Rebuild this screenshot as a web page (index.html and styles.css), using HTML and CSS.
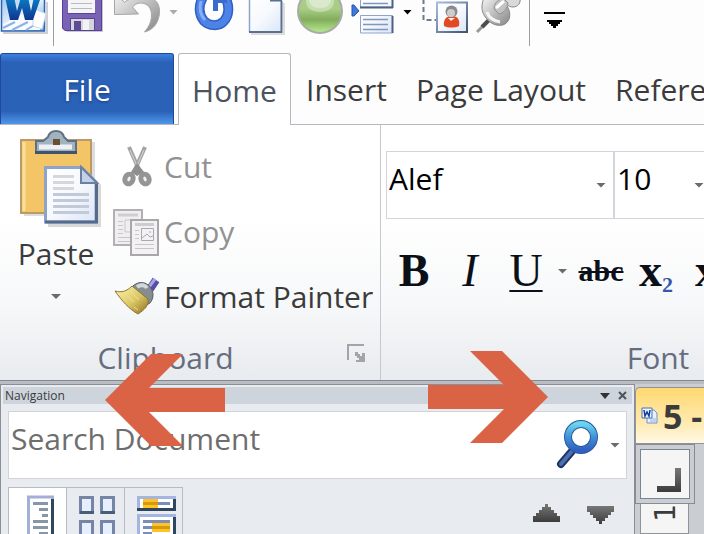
FILE: index.html
```html
<!DOCTYPE html>
<html lang="en">
<head>
  <meta charset="UTF-8">
  <meta name="viewport" content="width=device-width, initial-scale=1.0">
  <title>Word</title>
  <link rel="stylesheet" href="styles.css">
</head>
<body>
  <svg width="0" height="0" class="defs" aria-hidden="true">
    <defs>
      <linearGradient id="paper" x1="0" y1="0" x2="1" y2="1"><stop offset="0" stop-color="#fff"/><stop offset=".5" stop-color="#f6f9fe"/><stop offset="1" stop-color="#dbe5f6"/></linearGradient>
      <linearGradient id="edge" x1="0" y1="0" x2="1" y2="1"><stop offset="0" stop-color="#a9bbdf"/><stop offset="1" stop-color="#3f546f"/></linearGradient>
      <linearGradient id="dark" x1="0" y1="0" x2="0" y2="1"><stop offset="0" stop-color="#777"/><stop offset="1" stop-color="#3c3c3c"/></linearGradient>
      <linearGradient id="silver" x1="0" y1="0" x2="1" y2="1"><stop offset="0" stop-color="#f4f4f4"/><stop offset="1" stop-color="#858585"/></linearGradient>
    </defs>
  </svg>

  <header class="quick-access">
    <button class="tool" aria-label="Word">
      <svg width="50" height="50" viewBox="0 0 50 50">
        <defs><linearGradient id="wbg" x1="0" y1="0" x2="1" y2="1"><stop offset="0" stop-color="#9fc4ee"/><stop offset=".5" stop-color="#e6f1fc"/><stop offset="1" stop-color="#5f9be0"/></linearGradient>
        <linearGradient id="wl" x1="0" y1="0" x2="0" y2="1"><stop offset="0" stop-color="#0a7fc8"/><stop offset="1" stop-color="#10358f"/></linearGradient></defs>
        <path d="M3 33h44V2" fill="none" stroke="#cfcfcf" stroke-width="2"/>
        <path d="M1.500-3v34h43V-3" fill="url(#wbg)" stroke="#2d63b4" stroke-width="1.500"/>
        <path d="M3 24l28-14 15 3-6 17H3z" fill="#f9fbff"/>
        <path d="M3 28l12-6M12 30l16-8M26 30l12-7" stroke="#8bb3e6" stroke-width="2"/>
        <path d="M33 8l13 6-4 15-9-3z" fill="#fff" stroke="#c8d9f0"/>
        <path d="M5-3h9l3 14 4-14h7l3 14 3-14h7l-8 23h-8l-3-12-4 12h-8z" fill="url(#wl)"/>
      </svg>
    </button>
    <span class="divider"></span>
    <button class="tool" aria-label="Save">
      <svg width="51" height="50" viewBox="57 0 51 50">
        <path d="M65-2h38v34H67l-3-3z" fill="#c9c9c9"/>
        <path d="M62-2h40v33H65l-3-3z" fill="#7a62b5"/>
        <path d="M62.500-2v30l2.500 2.500h36.500V-2" fill="none" stroke="#55409a"/>
        <path d="M68-2h27v15H68z" fill="#f5f5f7"/>
        <path d="M71 3.500h21M71 8.500h21" stroke="#b9bac4"/>
        <path d="M67 13.500h29" stroke="#5a4499"/>
        <path d="M71 19h24v11H71z" fill="#d5d6dc"/>
        <path d="M74 21h7v9h-7z" fill="#5f4a96"/>
        <path d="M83 20h6v10h-6z" fill="#f3f3f5"/>
        <path d="M70.500 30V18.500h24V30" fill="none" stroke="#5a4499"/>
      </svg>
    </button>
    <button class="tool" aria-label="Undo">
      <svg width="57" height="50" viewBox="108 0 57 50">
        <path d="M114.500 14.500V-6l10 8c6-4 12-5 20-5 9 0 15 5 15 14 0 11-6 19-15 21 5-6 7-11 7-17 0-7-4-12-11-12-4 0-6 2-8 4l6 7z" fill="url(#silver)" stroke="#a6a6a6"/>
      </svg>
    </button>
    <button class="tool" aria-label="Undo options">
      <svg width="22" height="50" viewBox="165 0 22 50"><path d="M169.500 10h8l-4 4.500z" fill="#aaa"/></svg>
    </button>
    <button class="tool" aria-label="Repeat">
      <svg width="53" height="50" viewBox="187 0 53 50">
        <path d="M203-3c-5 9-4 18 1 24 5 5 15 6 20 0 5-5 6-15 1-24" fill="none" stroke="#2f60c4" stroke-width="10"/>
        <path d="M203-3c-5 9-4 18 1 24 5 5 15 6 20 0 5-5 6-15 1-24" fill="none" stroke="#4d82e6" stroke-width="7"/>
        <path d="M201 1c-2 8-1 14 4 19" fill="none" stroke="#86adf8" stroke-width="3"/>
        <path d="M213-2h14v5h-9v8h-5z" fill="#3a6bd0"/>
      </svg>
    </button>
    <button class="tool" aria-label="New">
      <svg width="50" height="50" viewBox="240 0 50 50">
        <path d="M249.500-2v34h32V0h-12v-2z" fill="url(#paper)"/>
        <path d="M251 34h33V3" fill="none" stroke="#dcdcdc" stroke-width="2"/>
        <path d="M249.500 0v32" stroke="#8ea4c9" stroke-width="1.500"/>
        <path d="M249 32h33M281.500 33V1M270 .5h12" stroke="#5b7090" stroke-width="2"/>
      </svg>
    </button>
    <button class="tool" aria-label="Record">
      <svg width="58" height="50" viewBox="290 0 58 50">
        <defs><linearGradient id="ball" x1="0" y1="0" x2="0" y2="1"><stop offset=".45" stop-color="#a9cc86"/><stop offset=".7" stop-color="#82ad5c"/><stop offset="1" stop-color="#b9ee90"/></linearGradient></defs>
        <circle cx="320" cy="11" r="22" fill="url(#ball)" stroke="#a9aba7" stroke-width="2"/>
        <path d="M306-1h28c1 8-5 13-14 13s-15-5-14-13z" fill="#fff" opacity=".35"/>
        <path d="M309-1h22c0 6-4 9-11 9s-11-3-11-9z" fill="#fff" opacity=".35"/>
      </svg>
    </button>
    <button class="tool" aria-label="Insert section">
      <svg width="50" height="50" viewBox="348 0 50 50">
        <path d="M352 5h2l5 6-5 5h-2z" fill="#3f78d8" stroke="#2553ae"/>
        <path d="M360.500-2v9h32v-9M360.500 33V15.500h32V33z" fill="url(#paper)" stroke="#8ea4c9"/>
        <path d="M360 7.500h33M392.500-1v9M392.500 16v17" stroke="#4b6284" stroke-width="2"/>
        <path d="M363 3.500h25M363 19.500h25M363 24.500h25M363 29.500h25" stroke="#7f96bd" stroke-width="1.500"/>
      </svg>
    </button>
    <button class="tool" aria-label="Section options">
      <svg width="20" height="50" viewBox="398 0 20 50"><path d="M403.500 10h8l-4 4.500z" fill="#000"/></svg>
    </button>
    <button class="tool" aria-label="Select recipient">
      <svg width="54" height="50" viewBox="418 0 54 50">
        <path d="M423.500-1v21H436" fill="none" stroke="#6d7b92" stroke-width="2" stroke-dasharray="5 3"/>
        <path d="M437 2.500h30V32h-30z" fill="url(#paper)" stroke="url(#edge)" stroke-width="2"/>
        <path d="M444 26c-1-6 2-10 8-10s8 4 7 10c-4 2-11 2-15 0z" fill="#e24b22"/>
        <circle cx="451.500" cy="11.500" r="6" fill="#8b8b8b"/><circle cx="451" cy="13" r="4" fill="#cdcdcd"/>
        <path d="M448 18l3 3 4-3z" fill="#ececec"/>
      </svg>
    </button>
    <button class="tool" aria-label="Pin">
      <svg width="54" height="50" viewBox="472 0 54 50">
        <path d="M477 32l6-6" stroke="#999" stroke-width="3"/><path d="M482 27l7-7" stroke="#4d4d4d" stroke-width="4"/>
        <path d="M484-2c-3 7-3 14 2 20 5 7 14 9 19 6 6-4 6-12 2-18L500-2z" fill="url(#silver)" stroke="#858585"/>
        <path d="M487 12c2 6 7 9 13 10" fill="none" stroke="#f5f5f5" stroke-width="3"/>
        <path d="M503-2h17c1 5-2 9-7 9-4 0-8-3-10-9z" fill="#d9d9d9" stroke="#888"/>
        <path d="M494 9c0-5 3-9 9-11l5 5c-1 6-4 10-9 11z" fill="#c2c2c2" stroke="#909090"/>
        <path d="M496 8l8-7" stroke="#fff" stroke-width="3"/>
      </svg>
    </button>
    <span class="divider"></span>
    <button class="tool" aria-label="Customize toolbar">
      <svg width="42" height="50" viewBox="533 0 42 50"><path d="M544 12h21v2h-21zM547 20h15v2h-2v2h-2v2h-2v2h-3v-2h-2v-2h-2v-2h-2z" fill="#000"/></svg>
    </button>
  </header>

  <nav class="tabs" aria-label="Ribbon tabs">
    <button class="tab file">File</button>
    <button class="tab active">Home</button>
    <button class="tab">Insert</button>
    <button class="tab">Page Layout</button>
    <button class="tab">References</button>
  </nav>

  <section class="ribbon">
    <div class="group clipboard">
      <div class="group-body">
        <button class="paste">
          <svg width="84" height="98" viewBox="19 129 84 98">
            <path d="M24 141h71v74H24z" fill="#ddd"/>
            <path d="M21 139h70v73H21z" fill="#f3c566" stroke="#b99a68" stroke-width="2"/>
            <path d="M24 141v69" stroke="#fbdf9a" stroke-width="3"/>
            <path d="M48 136c1-4 3-6 8-6s7 2 8 6l4 4h8v11H36v-11h7z" fill="#a3b2bf" stroke="#5e7183" stroke-width="2"/>
            <path d="M39 146h33" stroke="#eef2f6" stroke-width="5"/><path d="M53 138h7v6h-7z" fill="#6a5032"/>
            <path d="M35 151.500h42" stroke="#425469" stroke-width="3"/>
            <path d="M48 168h37l16 16v42H48z" fill="#d8d8d8"/>
            <path d="M45.500 166.500h36l14.500 14.500v40h-50.500z" fill="url(#paper)" stroke="#8da3c8" stroke-width="3"/>
            <path d="M45 221h53M96.500 181v41" stroke="#556b8b" stroke-width="3"/>
            <path d="M81 166v16h16z" fill="#c3d0e6" stroke="#6a80a3" stroke-width="2"/>
            <path d="M53 175.500h21M53 181.500h21M53 187.500h21" stroke="#d5d7db" stroke-width="3"/>
            <path d="M53 193.500h36M53 199.500h36M53 205.500h36M53 211.500h36" stroke="#c0cad8" stroke-width="3"/>
          </svg>
          <span class="paste-label">Paste</span>
          <span class="caret"></span>
        </button>
        <div class="commands">
          <button class="command" disabled>
            <svg width="48" height="48" viewBox="112 143 48 48">
              <path d="M129 147l11 25M145 147l-11 25" stroke="#a3a3a3" stroke-width="4"/>
              <path d="M130 150l8 18M144 150l-8 18" stroke="#d6d6d6"/>
              <path d="M131 172l6-9 7 9-7 4z" fill="#8f8f8f"/>
              <ellipse cx="129" cy="179" rx="4" ry="5" transform="rotate(25 129 179)" fill="#f0f0f0" stroke="#959595" stroke-width="5"/>
              <ellipse cx="145" cy="179" rx="4" ry="5" transform="rotate(-25 145 179)" fill="#f0f0f0" stroke="#959595" stroke-width="5"/>
            </svg>
            Cut
          </button>
          <button class="command" disabled>
            <svg width="48" height="48" viewBox="112 205 48 48">
              <path d="M114 207h28v35h-28z" fill="#f1eef1" stroke="#b3b0b4" stroke-width="2"/>
              <path d="M118 212h20" stroke="#d1ced1" stroke-width="3"/>
              <path d="M118 218.500h5M118 222.500h5M118 226.500h5M118 230.500h5M118 234.500h12M118 238.500h12M125 217h9v12h-9z" fill="none" stroke="#c9c5ca"/>
              <path d="M131 217h27v35h-27z" fill="#f4f1f4" stroke="#aaa7ab" stroke-width="2"/>
              <path d="M135 221.500h19" stroke="#ceccd0" stroke-width="3"/>
              <path d="M135 227.500h4M135 231.500h4M135 235.500h4M135 241.500h19M135 245.500h19" stroke="#c9c5ca"/>
              <path d="M141.500 225.500h12v12h-12zM142 235l5-4 3 3 3-1M149 229h2" fill="none" stroke="#aca9ae"/>
            </svg>
            Copy
          </button>
          <button class="command">
            <svg width="48" height="48" viewBox="112 272 48 48">
              <defs><linearGradient id="straw" x1="0" y1="0" x2="1" y2="1"><stop offset="0" stop-color="#fff6ac"/><stop offset=".55" stop-color="#dcc766"/><stop offset="1" stop-color="#8e6f20"/></linearGradient></defs>
              <path d="M150 288l6-9" stroke="#5350a4" stroke-width="8"/><path d="M149 286l6-8" stroke="#a7a5e5" stroke-width="3"/>
              <path d="M132 286c5-6 14-6 18 0 4 5 4 11 0 16l-5 3z" fill="#868d90" stroke="#596062"/>
              <path d="M137 286c4-3 8-2 10 1" fill="none" stroke="#d3d8da" stroke-width="4"/>
              <path d="M115 290c7 2 12 0 17-5l16 13c1 7-4 11-10 15-9-5-16-13-23-23z" fill="url(#straw)" stroke="#8c7632"/>
              <path d="M124 292l10 9M130 290l9 9M134 306l4 3" stroke="#f0e08c"/>
            </svg>
            Format Painter
          </button>
        </div>
      </div>
      <footer class="group-footer">
        <h2>Clipboard</h2>
        <button class="launcher" aria-label="Clipboard options">
          <svg width="19" height="19" viewBox="0 0 19 19"><path d="M1 16V1h16" fill="none" stroke="#a1a4aa" stroke-width="2"/><path d="M8 8h3v2h2v2h2V9h3v9H9v-2h3v-2h-2v-2H8z" fill="#a1a4aa"/></svg>
        </button>
      </footer>
    </div>

    <div class="group font">
      <div class="group-body">
        <div class="combos">
          <label class="combo family"><select aria-label="Font"><option>Alef</option></select><span class="caret"></span></label>
          <label class="combo size"><select aria-label="Font size"><option>10</option></select><span class="caret"></span></label>
        </div>
        <div class="styles">
          <button class="style bold">B</button>
          <button class="style italic">I</button>
          <button class="style underline">U</button>
          <button class="style more" aria-label="Underline options"><span class="caret"></span></button>
          <button class="style strike">abc</button>
          <button class="style script">x<sub>2</sub></button>
          <button class="style script">x</button>
        </div>
      </div>
      <footer class="group-footer"><h2>Font</h2></footer>
    </div>
  </section>

  <main class="workspace">
    <aside class="navigation">
      <header class="pane-title">
        <h3>Navigation</h3>
        <button aria-label="Pane options"><svg width="10" height="6" viewBox="0 0 10 6"><path d="M0 0h10L5 6z" fill="#333"/></svg></button>
        <button aria-label="Close"><svg width="9" height="9" viewBox="0 0 9 9"><path d="M1 1l7 7M8 1L1 8" stroke="#505357" stroke-width="2"/></svg></button>
      </header>
      <form class="search">
        <input type="text" placeholder="Search Document" aria-label="Search Document">
        <button type="button" aria-label="Search">
          <svg width="46" height="52" viewBox="555 419 46 52">
            <defs><linearGradient id="lens" x1="0" y1="0" x2="0" y2="1"><stop offset="0" stop-color="#6bd4ee"/><stop offset=".5" stop-color="#3f92d8"/><stop offset="1" stop-color="#315fc2"/></linearGradient></defs>
            <path d="M572 450l-12 14" stroke="#1f3266" stroke-width="8" stroke-linecap="round"/>
            <path d="M572 450l-12 14" stroke="#4d6fb0" stroke-width="4" stroke-linecap="round"/>
            <circle cx="580" cy="437" r="13" fill="#fff" stroke="#28589e" stroke-width="8"/>
            <circle cx="580" cy="437" r="13" fill="none" stroke="url(#lens)" stroke-width="6"/>
          </svg>
        </button>
        <button type="button" aria-label="Search options"><span class="caret"></span></button>
      </form>
      <div class="browse">
        <div class="views">
          <button class="view selected" aria-label="Headings">
            <svg width="57" height="54" viewBox="9 488 57 54">
              <path d="M28.500 542v-45h24v45" fill="#fff" stroke="#a3b0d6" stroke-width="3"/><path d="M52.500 499v43" stroke="#2f4661" stroke-width="3"/>
              <path d="M33 503.500h15M39 509.500h9M42 515.500h6M33 521.500h15M33 527.500h15M39 533.500h9" stroke="#8797a8" stroke-width="3"/>
            </svg>
          </button>
          <button class="view" aria-label="Pages">
            <svg width="57" height="54" viewBox="67 488 57 54">
              <g fill="#e6effd" stroke="#7485a8" stroke-width="3"><path d="M80.500 497.500h12v15h-12zM101.500 497.500h12v15h-12zM80.500 521.500h12v15h-12zM101.500 521.500h12v15h-12z"/></g>
              <path d="M80 512.500h14M101 512.500h14" stroke="#495d78" stroke-width="3"/>
            </svg>
          </button>
          <button class="view" aria-label="Results">
            <svg width="57" height="54" viewBox="125 488 57 54">
              <path d="M138.500 497.500h36v12h-36zM138.500 515.500h36v25h-36z" fill="#fff" stroke="#a5b5df" stroke-width="3"/>
              <path d="M137 509.500h39M174.500 499v12M174.500 517v24" stroke="#2f4661" stroke-width="3"/>
              <path d="M143 499h15v9h-15zM152 523h18v9h-18z" fill="#ffc326"/><path d="M143 503.500h15M152 527.500h18" stroke="#d59a0c" stroke-width="3"/>
              <path d="M158 503.500h12M143 521.500h27M143 527.500h9M143 533.500h9" stroke="#7a8eb8" stroke-width="3"/>
            </svg>
          </button>
        </div>
        <button class="step" aria-label="Previous"><svg width="27" height="18" viewBox="0 0 27 18"><path d="M12 0h3v3h3v3h3v3h3v3h3v6H0v-6h3V9h3V6h3V3h3z" fill="url(#dark)"/></svg></button>
        <button class="step next" aria-label="Next"><svg width="27" height="18" viewBox="0 0 27 18"><path d="M0 0h27v6h-3v3h-3v3h-3v3h-3v3h-3v-3H9v-3H6V9H3V6H0z" fill="url(#dark)"/></svg></button>
      </div>
    </aside>

    <section class="document">
      <button class="document-tab">
        <svg width="17" height="17" viewBox="0 0 17 17">
          <path d="M6 3h7l3 3v10H6z" fill="#e7f0fd" stroke="#7292c7"/><path d="M9 12h6M9 14h6" stroke="#9db6dd"/>
          <path d="M1 1h10v10H1z" fill="#edf4fe" stroke="#4472bd"/><path d="M3 3l1 6 2-4 2 4 1-6" fill="none" stroke="#123c98" stroke-width="1.500"/>
        </svg>
        <span>5 -</span>
      </button>
      <div class="ruler-corner">
        <button aria-label="Tab stop"><svg width="24" height="24" viewBox="0 0 24 24"><path d="M18 0h6v24H0v-6h18z" fill="url(#dark)"/></svg></button>
      </div>
      <div class="ruler"><span>1</span></div>
    </section>
  </main>

  <svg class="pointer left" width="120" height="92" viewBox="0 0 120 92" aria-hidden="true"><path d="M0 46L46 0h32L44 34h76v24H44l34 34H46z" fill="#d96344"/></svg>
  <svg class="pointer right" width="120" height="92" viewBox="0 0 120 92" aria-hidden="true"><path d="M120 46L74 0H42l34 34H0v24h76L42 92h32z" fill="#d96344"/></svg>
</body>
</html>
```
FILE: styles.css
```css
* {
  box-sizing: border-box;
}

body {
  margin: 0;
  height: 100vh;
  display: flex;
  flex-direction: column;
  overflow: hidden;
  position: relative;
  background: #fdfdfe;
  color: #3b3b3b;
  font-family: "Open Sans", "Noto Sans", sans-serif;
  font-size: 30px;
  line-height: 40px;
}

button,
select,
input {
  font: inherit;
  color: inherit;
  border: none;
  background: none;
  padding: 0;
  margin: 0;
}

svg {
  display: block;
  flex: none;
}

h2,
h3 {
  margin: 0;
  font-weight: 400;
}

.defs {
  position: absolute;
}

.caret {
  width: 10px;
  height: 5px;
  flex: none;
  background: #6b6b6b;
  clip-path: polygon(0 0, 100% 0, 50% 100%);
}

/* quick access toolbar */
.quick-access {
  display: flex;
  align-items: flex-start;
  height: 53px;
  flex: none;
}

.divider {
  width: 1px;
  height: 46px;
  margin: 0 3px;
  background: #9b9da0;
}

/* ribbon tabs */
.tabs {
  display: flex;
  flex: none;
  height: 72px;
  overflow: hidden;
  box-shadow: inset 0 -1px #b5b8be;
  white-space: nowrap;
}

.tab {
  flex: none;
  padding: 2px 14px 0 15px;
}

.tab.file {
  width: 174px;
  padding: 2px 0 0;
  margin: 0 4px 1px 0;
  color: #fff;
  background: linear-gradient(#3f7fe0, #2a62b8 12%, #2a62b8 82%, #4f97ea);
  border: 1px solid #1d4a9e;
  border-bottom: none;
  border-radius: 3px 3px 0 0;
  text-shadow: 0 1px 3px #173f80;
}

.tab.active {
  width: 113px;
  padding: 2px 0 0;
  background: #fff;
  border: 1px solid #b5b8be;
  border-bottom: none;
  border-radius: 3px 3px 0 0;
  color: #4b535f;
}

/* ribbon */
.ribbon {
  display: flex;
  flex: none;
  overflow: hidden;
  background: linear-gradient(#fff 35%, #f7f8f9 70%, #e8ebef);
  border-bottom: 1px solid #84878c;
}

.group {
  display: flex;
  flex-direction: column;
  flex: none;
}

.group.clipboard {
  width: 381px;
  border-right: 1px solid #c4c8cf;
}

.group.font {
  width: 549px;
  padding-left: 5px;
}

.group-body {
  display: flex;
  height: 211px;
}

.font .group-body {
  flex-direction: column;
}

.group-footer {
  display: flex;
  align-items: center;
  justify-content: center;
  height: 44px;
  color: #656d7e;
}

.group-footer h2 {
  font-size: 30px;
}

.clipboard .group-footer {
  padding-left: 16px;
}

.clipboard h2 {
  flex: 1;
  text-align: center;
}

.launcher {
  margin: 0 14px 10px 32px;
}

.paste {
  display: flex;
  flex-direction: column;
  align-items: center;
  width: 112px;
  padding-top: 5px;
}

.paste svg {
  margin-left: 10px;
}

.paste-label {
  margin: 6px 0 20px;
}

.commands {
  display: flex;
  flex-direction: column;
  padding-top: 9px;
}

.command {
  display: flex;
  align-items: center;
  gap: 4px;
  height: 65px;
  white-space: nowrap;
}

.command:disabled {
  color: #929292;
}

.combos {
  display: flex;
  padding-top: 26px;
}

.combo {
  display: flex;
  align-items: center;
  flex: none;
  height: 68px;
  padding: 0 7px 0 2px;
  border: 1px solid #d3d5da;
  background: #fff;
  color: #000;
}

.combo select {
  flex: 1;
  min-width: 0;
  padding-bottom: 12px;
  appearance: none;
  outline: none;
}

.combo.family {
  width: 228px;
}

.combo.size {
  width: 98px;
}

.styles {
  display: flex;
  align-items: center;
  height: 104px;
  font-family: "Liberation Serif", serif;
  font-size: 46px;
  color: #0b1018;
  text-shadow: 1px 1px 2px #aaa;
}

.style {
  width: 56px;
  flex: none;
  text-align: center;
}

.bold,
.strike,
.script {
  font-weight: 700;
}

.italic {
  font-style: italic;
}

.underline {
  text-decoration: underline;
  text-decoration-thickness: 2px;
  text-underline-offset: 4px;
}

.style.more {
  display: flex;
  justify-content: center;
  width: 17px;
}

.style.strike {
  width: 60px;
  font-size: 30px;
  text-decoration: line-through;
  text-decoration-thickness: 2px;
}

.style.script {
  text-align: left;
  padding-left: 8px;
}

.script sub {
  font-size: 22px;
  line-height: 0;
  color: #3658a8;
  vertical-align: -6px;
}

/* workspace */
.workspace {
  display: flex;
  flex: 1;
  min-height: 0;
  padding-top: 3px;
  background: #b9bdc3;
}

.navigation {
  flex: 0 0 635px;
  padding: 2px;
  background: #e8ecf1;
  border: 1px solid #8b8e93;
  border-bottom: none;
  overflow: hidden;
}

.pane-title {
  display: flex;
  align-items: center;
  gap: 8px;
  height: 17px;
  padding: 0 5px 0 2px;
  background: #cdd4dc;
}

.pane-title h3 {
  flex: 1;
  font-size: 12px;
  line-height: 16px;
}

.search {
  display: flex;
  align-items: center;
  height: 68px;
  margin: 7px 5px 8px;
  padding: 0 6px 0 2px;
  background: #fff;
  border: 1px solid #d0d3d8;
}

.search input {
  flex: 1;
  min-width: 0;
  padding-bottom: 12px;
  outline: none;
}

.search input::placeholder {
  color: #6e6e6e;
  opacity: 1;
}

.search .caret {
  display: block;
  margin-left: 8px;
}

.browse {
  display: flex;
  align-items: flex-start;
  gap: 27px;
  padding: 0 18px 0 5px;
}

.views {
  display: flex;
  margin-right: auto;
  border: 1px solid #b8bcc2;
}

.view + .view {
  border-left: 1px solid #b8bcc2;
}

.view.selected {
  background: #fff;
}

.step {
  padding-top: 17px;
}

.step.next {
  padding-top: 19px;
}

.document {
  flex: 1;
  min-width: 0;
  display: flex;
  flex-direction: column;
  align-items: flex-start;
  padding-top: 3px;
  background: #cacdd2;
  overflow: hidden;
}

.document-tab {
  display: flex;
  align-items: center;
  align-self: stretch;
  gap: 5px;
  flex: none;
  height: 57px;
  padding-left: 5px;
  white-space: nowrap;
  background: linear-gradient(#ffd870, #ffe9ac 60%, #fff8e4);
  border: 1px solid #8f939a;
  border-right: none;
  border-radius: 5px 0 0 0;
  font-size: 34px;
  font-weight: 700;
}

.ruler-corner {
  flex: none;
  padding: 4px;
  background: #cacdd2;
  border: 1px solid #878c94;
}

.ruler-corner button {
  display: flex;
  padding: 18px 8px 6px 16px;
  background: #f5f5f5;
  border: 1px solid #788593;
}

.ruler {
  flex: 1;
  width: 49px;
  margin-left: 5px;
  padding-left: 14px;
  background: #f5f5f5;
  border: 1px solid #8f939a;
  border-top: none;
}

.ruler span {
  display: block;
  writing-mode: vertical-rl;
  transform: rotate(180deg);
  font-family: "DejaVu Sans", sans-serif;
  font-size: 28px;
  line-height: 22px;
}

/* arrows drawn over the window */
.pointer {
  position: absolute;
}

.pointer.left {
  left: 105px;
  top: 354px;
}

.pointer.right {
  left: 428px;
  top: 351px;
}
```
